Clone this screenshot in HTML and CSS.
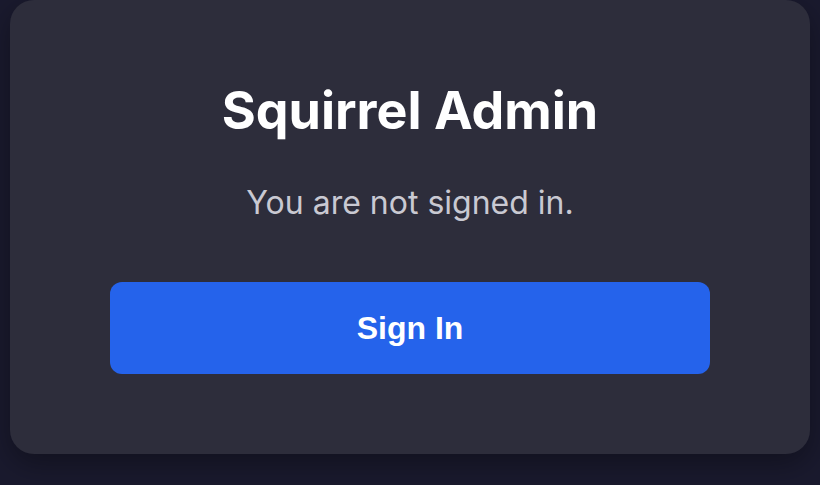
FILE: index.html
```html
<!DOCTYPE html>
<html lang="en">
<head>
<meta charset="utf-8">
<title>Squirrel Admin</title>
<link rel="stylesheet" href="styles.css">
</head>
<body>
<main class="card">
  <h1 class="title">Squirrel Admin</h1>
  <p class="subtitle">You are not signed in.</p>
  <button class="signin" type="button">Sign In</button>
</main>
</body>
</html>
```
FILE: styles.css
```css
html, body {
  margin: 0;
  padding: 0;
}
body {
  background: #1a1a2e;
  width: 820px;
  height: 485px;
  overflow: hidden;
  font-family: Inter, "Noto Sans", sans-serif;
  padding: 0 10px;
  box-sizing: border-box;
}
.card {
  box-sizing: border-box;
  width: 800px;
  height: 454px;
  background: #2d2d3b;
  border-radius: 24px;
  box-shadow: 0 10px 30px rgba(0, 0, 0, 0.35);
  display: flex;
  flex-direction: column;
  align-items: center;
  padding: 79px 100px 0;
}
.title {
  margin: 0;
  font-size: 52px;
  font-weight: 700;
  line-height: 64px;
  color: #ffffff;
}
.subtitle {
  margin: 40px 0 0;
  font-size: 32px;
  line-height: 40px;
  color: #c9c9d2;
}
.signin {
  margin-top: 59px;
  width: 600px;
  height: 92px;
  border: none;
  border-radius: 12px;
  background: #2563eb;
  color: #ffffff;
  font-family: "Liberation Sans", Arial, sans-serif;
  font-weight: 700;
  font-size: 32px;
  cursor: pointer;
}
```
